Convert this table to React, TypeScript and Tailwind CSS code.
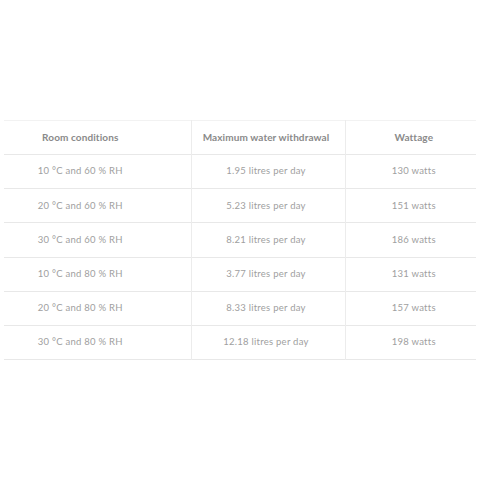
import React from "react";

const rows = [
  ["10 °C and 60 % RH", "1.95 litres per day", "130 watts"],
  ["20 °C and 60 % RH", "5.23 litres per day", "151 watts"],
  ["30 °C and 60 % RH", "8.21 litres per day", "186 watts"],
  ["10 °C and 80 % RH", "3.77 litres per day", "131 watts"],
  ["20 °C and 80 % RH", "8.33 litres per day", "157 watts"],
  ["30 °C and 80 % RH", "12.18 litres per day", "198 watts"],
];

export default function App() {
  return (
    <div className="w-[480px] h-[480px] bg-white pt-[120px] px-[4px]" style={{ fontFamily: "Lato, 'Open Sans', sans-serif" }}>
      <table className="w-[472px] border-collapse table-fixed">
        <colgroup>
          <col className="w-[187px]" />
          <col className="w-[154px]" />
          <col className="w-[131px]" />
        </colgroup>
        <thead>
          <tr className="h-[34px] border-t border-[#f2f2f2] border-b border-b-[#e8e8e8]">
            <th className="pr-[34px] text-[10px] font-bold text-[#8a8a8a] tracking-[0.1px] text-center border-r border-[#ececec]">Room conditions</th>
            <th className="pr-[4px] text-[10px] font-bold text-[#8a8a8a] tracking-[0.1px] text-center border-r border-[#ececec]">Maximum water withdrawal</th>
            <th className="pl-[6px] text-[10px] font-bold text-[#8a8a8a] tracking-[0.1px] text-center">Wattage</th>
          </tr>
        </thead>
        <tbody>
          {rows.map((r, i) => (
            <tr key={i} className="h-[34.2px] border-b border-[#e8e8e8]">
              <td className="pr-[34px] text-[9.5px] text-[#a0a0a0] tracking-[0.25px] text-center border-r border-[#ececec]">{r[0]}</td>
              <td className="pr-[4px] text-[9.5px] text-[#a0a0a0] tracking-[0.25px] text-center border-r border-[#ececec]">{r[1]}</td>
              <td className="pl-[6px] text-[9.5px] text-[#a0a0a0] tracking-[0.25px] text-center">{r[2]}</td>
            </tr>
          ))}
        </tbody>
      </table>
    </div>
  );
}
